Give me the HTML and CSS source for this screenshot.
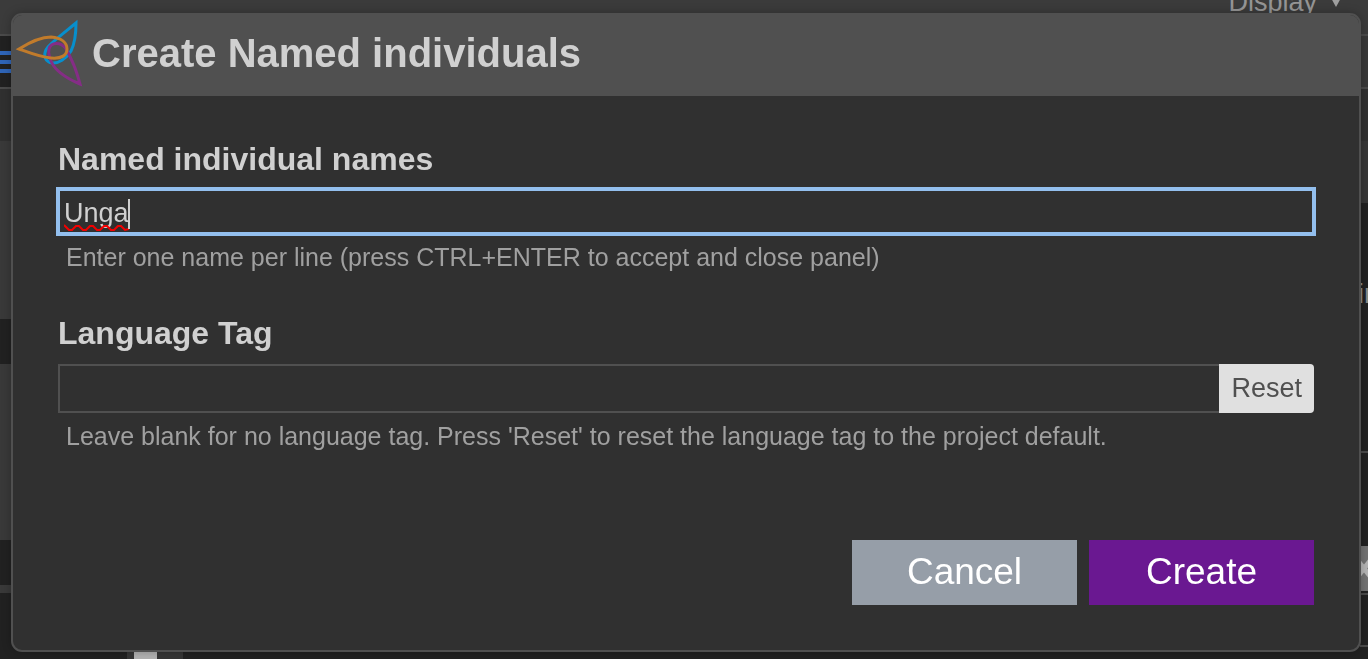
FILE: index.html
```html
<!DOCTYPE html>
<html lang="en">
<head>
<meta charset="utf-8">
<title>Create Named individuals</title>
<link rel="stylesheet" href="styles.css">
</head>
<body>
<div class="app">
  <header class="app-bar"><span class="app-menu">Display <svg class="app-caret" viewBox="0 0 10 10" aria-hidden="true"><path d="M0 0h10L5 9z"/></svg></span></header>
  <div class="app-tabs">
    <svg class="app-list" viewBox="0 0 11 24" aria-hidden="true"><path d="M0 3h11M0 12h11M0 21h11"/></svg>
    <span class="app-tabs-end"></span>
  </div>
  <div class="app-columns">
    <div class="side">
      <div class="side-gap"></div>
      <div class="side-panel side-panel-first"></div>
      <div class="side-row"></div>
      <div class="side-panel"></div>
      <div class="side-row"></div>
      <div class="side-rule"></div>
    </div>
    <div class="canvas"><span class="scroll"><span class="thumb"></span></span></div>
    <div class="detail">
      <div class="detail-gap"></div>
      <div class="detail-head"></div>
      <div class="detail-text">ir</div>
      <div class="detail-field">
        <svg class="detail-close" viewBox="0 0 8 45" preserveAspectRatio="none" aria-hidden="true"><path d="M-2 15L10 30M-2 30L10 15"/></svg>
      </div>
      <div class="detail-row"></div>
      <div class="detail-end"></div>
    </div>
  </div>
</div>

<div class="overlay">
  <form class="dialog" role="dialog" aria-labelledby="dialog-title">
    <header class="dialog-header">
      <svg class="logo" viewBox="0 0 66 68" aria-hidden="true">
        <path class="logo-blue" d="M59 4C48 13 36 22 31 28C26 34 27 41 33 43.500C41 46 50 39 54 32C58 24 59 12 59 4Z"/>
        <path class="logo-purple" d="M63 65C51 60 38 52 34 42C30 33 31 24.500 39.500 24.500C48 24.500 51 33 55 42C59 50 61 58 63 65Z"/>
        <path class="logo-orange" d="M2 30C13 23 23 18 34 18C45 19 50 24 50 30C50 36 45 40 34 39C23 38 13 34 2 30Z"/>
      </svg>
      <h1 class="dialog-title" id="dialog-title">Create Named individuals</h1>
    </header>
    <div class="dialog-body">
      <div class="field">
        <label class="field-label" for="names">Named individual names</label>
        <div class="names">
          <textarea class="names-input" id="names" rows="1" spellcheck="false">Unga</textarea>
          <svg class="spelling" viewBox="0 0 65 8" aria-hidden="true"><path d="M0 1L5 6H8L12 2H15L19 6H22L26 2H29L33 6H36L40 2H43L47 6H50L54 2H57L61 6L65 5"/></svg>
          <span class="text-cursor"></span>
        </div>
        <p class="hint">Enter one name per line (press CTRL+ENTER to accept and close panel)</p>
      </div>
      <div class="field">
        <label class="field-label" for="language">Language Tag</label>
        <div class="language">
          <input class="language-input" id="language" type="text">
          <button class="reset" type="button">Reset</button>
        </div>
        <p class="hint">Leave blank for no language tag. Press 'Reset' to reset the language tag to the project default.</p>
      </div>
      <div class="actions">
        <button class="action cancel" type="button">Cancel</button>
        <button class="action create" type="submit">Create</button>
      </div>
    </div>
  </form>
</div>
</body>
</html>
```

FILE: styles.css
```css
* { box-sizing: border-box; }

body {
  margin: 0;
  height: 100vh;
  overflow: hidden;
  background: #212121;
  color: #d0d0d0;
  font-family: "Liberation Sans", Arial, sans-serif;
}

button, input, textarea { font: inherit; border-radius: 0; }

/* Application behind the dialog */
.app { height: 100%; display: flex; flex-direction: column; }
.app-bar {
  height: 36px;
  flex: none;
  display: flex;
  justify-content: flex-end;
  padding-right: 27px;
  background: #3b3b3b;
  border-bottom: 2px solid #4a4a4a;
  color: #959595;
  font-size: 27px;
  line-height: 4px;
}
.app-menu { display: flex; gap: 14px; }
.app-caret { width: 10px; height: 10px; margin-top: -2px; fill: #a0a0a0; }
.app-tabs {
  height: 53px;
  flex: none;
  display: flex;
  justify-content: space-between;
  align-items: center;
  border-bottom: 2px solid #4a4a4a;
}
.app-list { width: 11px; height: 24px; stroke: #2f65b8; stroke-width: 4; }
.app-tabs-end { width: 11px; align-self: stretch; background: #383838; }
.app-columns { flex: 1; min-height: 0; display: flex; }
.side { width: 11px; }
.side-gap { height: 52px; background: #303030; }
.side-panel { height: 176px; background: #393939; }
.side-panel-first { height: 178px; }
.side-row { height: 45px; }
.side-rule { height: 8px; background: #393939; }
.canvas { flex: 1; display: flex; align-items: flex-end; padding-left: 116px; }
.scroll { width: 56px; height: 12px; padding: 0 26px 0 7px; background: #353535; }
.thumb { display: block; height: 100%; background: #b2b2b2; }
.detail { width: 8px; }
.detail-gap { height: 52px; background: #303030; }
.detail-head { height: 62px; background: #363636; }
.detail-text {
  height: 250px;
  padding-top: 76px;
  overflow: hidden;
  border-bottom: 2px solid #4a4a4a;
  color: #8a8a8a;
  font-size: 27px;
  line-height: 30px;
  text-indent: -2px;
}
.detail-field { height: 142px; padding-top: 93px; border-bottom: 2px solid #4a4a4a; }
.detail-close { display: block; width: 100%; height: 45px; background: #737373; stroke: #b5b5b5; stroke-width: 5; }
.detail-row { height: 52px; border-bottom: 2px solid #4a4a4a; }

/* Dialog */
.overlay { position: fixed; inset: 0; padding: 13px 7px 7px 11px; display: flex; }
.dialog {
  flex: 1;
  display: flex;
  flex-direction: column;
  background: #303030;
  border: 2px solid #505050;
  border-radius: 11px;
  overflow: hidden;
  box-shadow: 0 0 10px rgba(0, 0, 0, 0.25);
}
.dialog-header {
  display: flex;
  gap: 9px;
  padding: 4px 4px 8px;
  background: #505050;
}
.logo { width: 66px; height: 68px; fill: none; stroke-width: 3; overflow: visible; }
.logo-blue { stroke: #078fcd; }
.logo-purple { stroke: #852d86; }
.logo-orange { stroke: #c17b2b; }
.dialog-title { margin: 0; font-size: 40px; line-height: 69px; font-weight: 700; }
.dialog-body { flex: 1; display: flex; flex-direction: column; padding: 44px 45px 45px; }
.field { margin-bottom: 42px; }
.field-label {
  display: block;
  margin-bottom: 11px;
  font-size: 32px;
  line-height: 39px;
  font-weight: 700;
}
.names { position: relative; display: flex; height: 45px; margin-top: -1px; }
.names-input {
  flex: 1;
  padding: 6px 4px 0;
  border: 2px solid #93bfee;
  outline: 2px solid #93bfee;
  background: transparent;
  color: #d0d0d0;
  caret-color: transparent;
  font-size: 27px;
  line-height: 33px;
  resize: none;
  overflow: hidden;
}
.spelling { position: absolute; left: 6px; top: 35px; width: 65px; height: 8px; fill: none; stroke: #f40000; stroke-width: 2; }
.text-cursor { position: absolute; left: 70px; top: 10px; width: 2px; height: 30px; background: #d0d0d0; }
.hint { margin: 9px 8px 0; color: #a0a0a0; font-size: 25px; line-height: 29px; }
.language { display: flex; height: 49px; }
.language-input {
  flex: 1;
  min-width: 0;
  padding: 0 8px;
  border: 2px solid #505050;
  border-right: 0;
  outline: none;
  background: transparent;
  color: #d0d0d0;
  font-size: 27px;
}
.reset {
  padding: 0 12px 1px;
  border: 0;
  border-radius: 0 4px 4px 0;
  background: #e0e0e0;
  color: #505050;
  font-size: 27px;
}
.actions { margin-top: auto; display: flex; justify-content: flex-end; gap: 12px; }
.action { width: 225px; height: 65px; padding: 0 0 2px; border: 0; color: #fff; font-size: 37px; }
.cancel { background: #969ea8; }
.create { background: #6a1891; }
```
